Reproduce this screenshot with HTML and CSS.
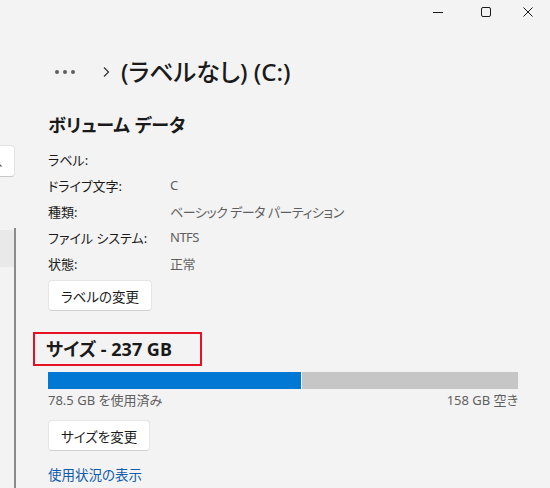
FILE: index.html
```html
<!DOCTYPE html>
<html lang="ja">
<head>
    <meta charset="UTF-8">
    <meta name="viewport" content="width=device-width, initial-scale=1.0">
    <title>(ラベルなし) (C:)</title>
    <link rel="stylesheet" href="styles.css">
</head>
<body>

<!-- Window Controls -->
<div class="titlebar">
    <span class="win-btn win-min">
        <svg width="12" height="12" viewBox="0 0 12 12"><path d="M1 6.5h10" stroke="#1a1a1a" stroke-width="1"/></svg>
    </span>
    <span class="win-btn win-max">
        <svg width="12" height="12" viewBox="0 0 12 12"><rect x="1.5" y="1.5" width="9" height="9" rx="1.5" fill="none" stroke="#1a1a1a" stroke-width="1"/></svg>
    </span>
    <span class="win-btn win-close">
        <svg width="12" height="12" viewBox="0 0 12 12"><path d="M1.5 1.5l9 9M10.5 1.5l-9 9" stroke="#1a1a1a" stroke-width="1"/></svg>
    </span>
</div>

<div class="app">
    <!-- Sidebar (mostly cut off) -->
    <div class="sidebar">
        <div class="search-box">
            <svg width="16" height="16" viewBox="0 0 16 16"><circle cx="6" cy="6" r="4.5" fill="none" stroke="#555" stroke-width="1"/><path d="M9.5 9.5l4 4" stroke="#555" stroke-width="1.2"/></svg>
        </div>
        <div class="nav-list">
            <div class="nav-item selected"></div>
        </div>
    </div>

    <div class="content">
        <div class="breadcrumb">
            <svg class="more" width="24" height="6" viewBox="0 0 24 6"><circle cx="3" cy="3" r="2" fill="#5f5f5f"/><circle cx="11" cy="3" r="2" fill="#5f5f5f"/><circle cx="19" cy="3" r="2" fill="#5f5f5f"/></svg>
            <svg class="chevron" width="8" height="12" viewBox="0 0 8 12"><path d="M2 1.5l4.5 4.5L2 10.5" fill="none" stroke="#333" stroke-width="1.2"/></svg>
            <h1 class="page-title">(ラベルなし) (C:)</h1>
        </div>

        <h2 class="section-title">ボリューム データ</h2>
        <div class="info-row first-row"><span class="info-label">ラベル:</span><span class="info-value"></span></div>
        <div class="info-row"><span class="info-label">ドライブ文字:</span><span class="info-value">C</span></div>
        <div class="info-row"><span class="info-label">種類:</span><span class="info-value">ベーシック データ パーティション</span></div>
        <div class="info-row"><span class="info-label">ファイル システム:</span><span class="info-value">NTFS</span></div>
        <div class="info-row"><span class="info-label">状態:</span><span class="info-value">正常</span></div>
        <button class="btn btn-label">ラベルの変更</button>

        <h2 class="section-title size-title">サイズ - 237 GB</h2>
        <div class="usage-bar">
            <div class="usage-fill" style="width: 53.8%"></div>
        </div>
        <div class="usage-text">
            <span>78.5 GB を使用済み</span>
            <span>158 GB 空き</span>
        </div>
        <button class="btn btn-size">サイズを変更</button>
        <a href="#" class="link">使用状況の表示</a>
    </div>
</div>

</body>
</html>
```

FILE: styles.css
```css
body {
    margin: 0;
    padding: 0;
    font-family: "Noto Sans", "Noto Sans CJK JP", sans-serif;
    font-feature-settings: "palt";
    background: #f3f3f3;
    color: #1a1a1a;
    height: 488px;
    overflow: hidden;
    display: flex;
    flex-direction: column;
}

/* Title bar */
.titlebar {
    height: 24px;
    display: flex;
    justify-content: flex-end;
    align-items: center;
    padding-right: 2px;
}

.win-btn {
    height: 22px;
    display: flex;
    align-items: center;
    justify-content: center;
}

.win-min {
    width: 52px;
}

.win-max {
    width: 44px;
}

.win-close {
    width: 40px;
}

.app {
    flex: 1;
    display: flex;
}

/* Sidebar */
.sidebar {
    width: 16px;
    display: flex;
    flex-direction: column;
}

.search-box {
    margin-top: 121px;
    width: 14px;
    height: 30px;
    background: #fff;
    border: 1px solid #e3e3e3;
    border-left: none;
    border-bottom-color: #c8c8c8;
    border-radius: 0 4px 4px 0;
    overflow: hidden;
    display: flex;
    align-items: center;
}

.search-box svg {
    margin-left: -12px;
    flex-shrink: 0;
}

.nav-list {
    margin-top: 51px;
    flex: 1;
    border-right: 2px solid #8b8b8b;
    padding-top: 2px;
}

.nav-item {
    height: 37px;
}

.nav-item.selected {
    background: #e9e9e9;
}

/* Content */
.content {
    flex: 1;
    padding-left: 32px;
    display: flex;
    flex-direction: column;
    align-items: flex-start;
}

.breadcrumb {
    margin-top: 28px;
    height: 40px;
    display: flex;
    align-items: center;
}

.more {
    margin-left: 6px;
    margin-right: 24px;
}

.chevron {
    margin-right: 11px;
}

.page-title {
    margin: 0;
    font-size: 24px;
    font-weight: 500;
    line-height: 40px;
}

.section-title {
    margin: 18px 0 0;
    height: 30px;
    font-size: 18px;
    font-weight: 700;
    line-height: 30px;
}

.info-row {
    height: 26px;
    display: flex;
    align-items: center;
    font-size: 13px;
}

.first-row {
    margin-top: 6px;
}

.info-label {
    width: 122px;
}

.info-value {
    color: #5f5f5f;
    letter-spacing: -0.5px;
}

.btn {
    height: 31px;
    padding: 0 12px;
    background: #fff;
    border: 1px solid #e5e5e5;
    border-bottom-color: #cfcfcf;
    border-radius: 4px;
    font-family: inherit;
    font-feature-settings: "palt";
    font-size: 13.5px;
    color: #1a1a1a;
}

.btn-label {
    margin-top: 4px;
}

.size-title {
    margin: 21px 0 0 -15px;
    height: 30px;
    width: 154px;
    padding-left: 11px;
    border: 2px solid #e81123;
}

.usage-bar {
    margin-top: 6px;
    width: 470px;
    height: 17px;
    background: #c6c6c6;
    display: flex;
}

.usage-fill {
    background: #0078d4;
    border-right: 1px solid #fff;
}

.usage-text {
    width: 470px;
    height: 20px;
    display: flex;
    justify-content: space-between;
    align-items: center;
    font-size: 13px;
    color: #5f5f5f;
}

.btn-size {
    margin-top: 11px;
}

.link {
    margin-top: 14px;
    height: 20px;
    line-height: 20px;
    font-size: 13.5px;
    color: #0f5cab;
    text-decoration: none;
}
```
